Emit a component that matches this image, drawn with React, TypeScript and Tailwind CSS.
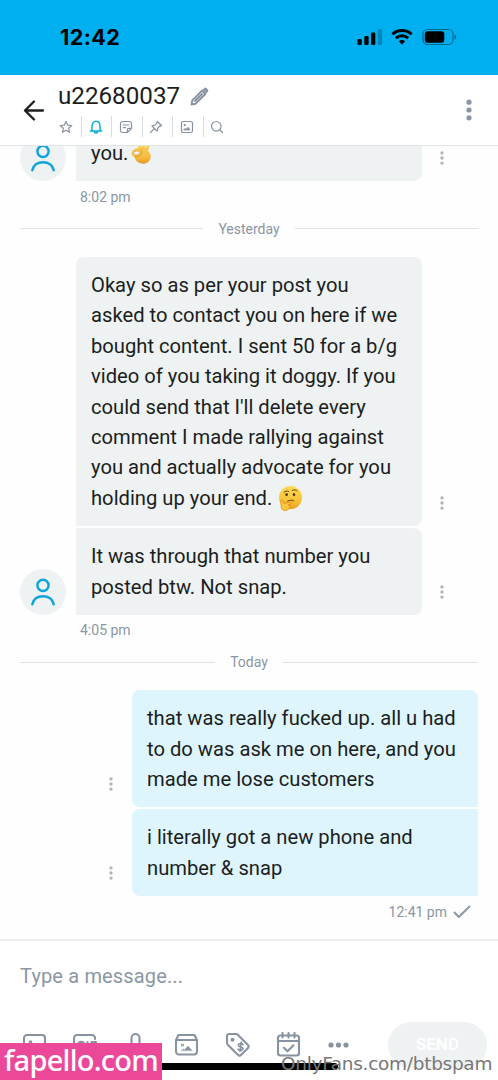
import type { ReactNode } from "react";

const stroke = {
  fill: "none",
  stroke: "currentColor",
  strokeLinecap: "round" as const,
  strokeLinejoin: "round" as const,
};

function Dots({ big = false }: { big?: boolean }) {
  return big ? (
    <svg width="6" height="22" viewBox="0 0 6 22" className="fill-[#8a96a3]">
      <circle cx="3" cy="3.2" r="2.6" />
      <circle cx="3" cy="11" r="2.6" />
      <circle cx="3" cy="18.8" r="2.6" />
    </svg>
  ) : (
    <svg width="4" height="14" viewBox="0 0 4 14" className="shrink-0 fill-[#b0b5b9]">
      <circle cx="2" cy="1.9" r="1.7" />
      <circle cx="2" cy="7" r="1.7" />
      <circle cx="2" cy="12.1" r="1.7" />
    </svg>
  );
}

function Avatar() {
  return (
    <div className="h-[46px] w-[46px] shrink-0 rounded-full bg-[#eef2f3] text-[#0fa5dc]">
      <svg width="46" height="46" viewBox="0 0 46 46" {...stroke} strokeWidth="2.5">
        <circle cx="23" cy="16.3" r="5.600" />
        <path d="M12.300 35.200c1-5 5.200-8 10.700-8s9.700 3 10.700 8" />
      </svg>
    </div>
  );
}

function OkHand() {
  return (
    <svg width="21" height="24" viewBox="0 0 21 24" className="ml-[3px] inline-block align-[-5px]">
      <defs>
        <linearGradient id="hand" x1="0" y1="0" x2="0" y2="1">
          <stop offset="0" stopColor="#fbd35c" />
          <stop offset=".7" stopColor="#f6bd3f" />
          <stop offset="1" stopColor="#e69a25" />
        </linearGradient>
      </defs>
      <path d="M7.500 7 6 2.500Q6 .8 7.400 1q1.200.3 2 2.400l1.400 3.400.6-4.600Q11.900.5 13.100.8q1.400.4 1.100 2.200l-.3 4.200 2.200-2.900q1-1.100 1.900-.4 1 .800.300 2.200l-1.300 3.600c2.700 2.500 3.400 6 1.900 9-1.500 2.900-4.400 4.200-7.800 3.900-4-.4-6.300-2.700-7.500-6.200L.8 13.800C.2 12 .8 10.200 2.600 8.800 4.100 7.600 5.900 7 7.500 7Z" fill="url(#hand)" />
      <ellipse cx="5.600" cy="12" rx="3.300" ry="2.100" transform="rotate(-8 5.600 12)" fill="#eef2f3" stroke="#dba034" strokeWidth=".8" />
      <path d="M9.500 8.200c1.800 1.300 2 3.500.9 5.200-1.300 2-3.600 2.700-6.300 2.500" {...stroke} stroke="#d99a2c" strokeWidth=".9" />
    </svg>
  );
}

function Thinking() {
  return (
    <svg width="25" height="26" viewBox="0 0 25 26" className="ml-[1px] inline-block align-[-6px]">
      <defs>
        <linearGradient id="face" x1="0" y1="0" x2="0" y2="1">
          <stop offset="0" stopColor="#fbda55" />
          <stop offset=".65" stopColor="#f8c238" />
          <stop offset="1" stopColor="#ee9b20" />
        </linearGradient>
      </defs>
      <circle cx="12.500" cy="12.500" r="11.500" fill="url(#face)" />
      <ellipse cx="8.600" cy="9.600" rx="1.300" ry="1.700" fill="#583613" />
      <ellipse cx="16" cy="9.600" rx="1.300" ry="1.700" fill="#583613" />
      <path d="M6 7.200c1.200-1.200 3-1.500 4.600-.8M14.300 5.400c1.800-1 3.600-.7 4.800.6M9.500 16.200c2-1.300 4.600-1.400 6.400-.4" {...stroke} stroke="#6d4312" strokeWidth="1" />
      <path d="M3 16.500c-.8-1.700 1-2.500 1.800-1l1.200 3 6.300-1.400c1.800-.2 2.100 1.500.5 2l-2.700.8c1.800.6 2 2.300.9 3.800-1.400 1.900-4.700 2.500-6.600.8-1.800-1.600-1.100-4.900-1.400-8Z" fill="#ffc83b" stroke="#db8a1c" strokeWidth=".8" />
    </svg>
  );
}

function Bubble({ lines, mine = false, shape }: { lines: ReactNode[]; mine?: boolean; shape: string }) {
  return (
    <div
      className={`w-[346px] shrink-0 px-[15px] py-[13px] text-[20.2px] leading-[30.4px] whitespace-nowrap text-[#1b1e20] ${
        mine ? "bg-[#def5fe]" : "bg-[#eef2f3]"
      } ${shape}`}
    >
      {lines.map((line, i) => (
        <div key={i} className="h-[30.4px]">{line}</div>
      ))}
    </div>
  );
}

function DayDivider({ label }: { label: string }) {
  return (
    <div className="flex h-5 items-center gap-[15px] px-5 text-[14px] leading-5 text-[#8a96a3]">
      <div className="h-px flex-1 bg-[#dde3e6]" />
      {label}
      <div className="h-px flex-1 bg-[#dde3e6]" />
    </div>
  );
}

function StatusBar() {
  return (
    <header className="flex h-[75px] shrink-0 items-center justify-between bg-[#00aff0] pr-[41px] pl-[60px] text-black">
      <span className="-mt-[2px] font-['Inter',sans-serif] text-[21.500px] leading-6 font-bold tracking-[0.45px]">12:42</span>
      <div className="-mt-[1px] flex items-center">
        <svg width="26" height="18" viewBox="0 0 26 18">
          <rect x="0.500" y="11" width="4.300" height="6" rx="1.300" />
          <rect x="7.300" y="8" width="4.300" height="9" rx="1.300" />
          <rect x="14" y="4.500" width="4.300" height="12.500" rx="1.300" />
          <rect x="20.800" y="1" width="4.300" height="16" rx="1.300" opacity=".22" />
        </svg>
        <svg width="22" height="18" viewBox="0 0 22 18" className="ml-[8px]" fill="none" stroke="black" strokeWidth="2.900">
          <path d="M1.400 6.300c5.400-5 13.800-5 19.200 0" />
          <path d="M4.900 10.100c3.500-3.200 8.700-3.200 12.200 0" />
          <path d="M7.800 13.200c1.800-1.600 4.600-1.600 6.400 0L11 16.600Z" fill="black" stroke="none" />
        </svg>
        <svg width="35" height="18" viewBox="0 0 35 18" className="ml-[9px]">
          <rect x="1" y="1.500" width="30" height="15" rx="4.600" fill="none" stroke="black" strokeOpacity=".4" strokeWidth="1.200" />
          <rect x="2.800" y="3.300" width="19.500" height="11.400" rx="3" />
          <path d="M32.500 6.500q1.800.8 1.800 2.500t-1.800 2.500Z" opacity=".45" />
        </svg>
      </div>
    </header>
  );
}

function HeaderTools() {
  const icons: ReactNode[] = [
    <path key="star" d="m7 1.300 1.650 3.800 4.100.4-3.100 2.700.9 4.100L7 10.150 3.450 12.300l.9-4.100-3.100-2.700 4.100-.4Z" />,
    <path key="bell" d="M1.300 11h11.400M2.400 11c.7-1 .6-2.200.6-4.200C3 3.500 4.400 1.300 7 1.300s4 2.200 4 5.500c0 2 0 3.200.6 4.200M5 11.300c.3 2.200 3.700 2.200 4 0" strokeWidth="1.500" />,
    <path key="note" d="M8.300 12.500H3.700a2.200 2.200 0 0 1-2.200-2.200V3.700a2.200 2.200 0 0 1 2.200-2.200h6.600a2.200 2.200 0 0 1 2.200 2.200v4.600Zm0 0V9.800a1.500 1.500 0 0 1 1.500-1.500h2.700M4.200 5h5.600M4.200 7.700h2.300" />,
    <path key="pin" d="m8.500 1.500 4 4-1.100.8-.8-.2-2 2.200c.3 1.200.1 2-.6 2.700L3 6c.7-.7 1.600-.9 2.700-.6l2.200-2-.2-.8ZM5.300 8.700 1.500 12.500" />,
    <g key="media"><rect x="1.500" y="1.500" width="11" height="11" rx="1.800" /><path d="M3.800 10h6.400L8 7.200 6.200 9.300 5.200 8.500Z" strokeWidth=".7" fill="currentColor" /><circle cx="4.800" cy="5.200" r=".5" /></g>,
    <g key="search"><circle cx="6.300" cy="6.300" r="4.800" /><path d="m10 10 2.500 2.500" /></g>,
  ];
  return (
    <div className="-mt-px flex h-[21px] items-center">
      {icons.map((icon, i) => (
        <div
          key={i}
          className={`flex h-[21px] shrink-0 items-center ${i === 0 ? "w-[22px]" : "w-[30.400px] justify-center border-l border-[#d5dbdf] pr-[2px]"}`}
        >
          <svg width="14" height="14" viewBox="0 0 14 14" {...stroke} strokeWidth="1.200" className={i === 1 ? "text-[#09b0d6]" : "text-[#8793a0]"}>
            {icon}
          </svg>
        </div>
      ))}
    </div>
  );
}

function ChatHeader() {
  return (
    <div className="flex h-[71px] shrink-0 border-b border-[#dfe4e6] bg-white pr-[26px] pl-[23px]">
      <svg width="22" height="22" viewBox="0 0 22 22" {...stroke} strokeWidth="2.300" className="mt-[25px] shrink-0 text-[#1b1e20]">
        <path d="M20 10.500H2M11 1.500 2 10.500l9 9" />
      </svg>
      <div className="ml-[14px] flex-1">
        <div className="flex h-[42px] items-center">
          <span className="-ml-px text-[24.200px] leading-7 text-[#1b1e20]">u22680037</span>
          <svg width="19" height="19" viewBox="0 0 19 19" {...stroke} strokeWidth="1.900" className="ml-[10px] text-[#8793a0]">
            <path d="m1.500 17.500.8-4.200L12 3.600l3.400 3.400-9.700 9.700ZM5 14l7-7" />
            <path d="m13.200 2.500 1-1c1.800-1.300 4.500 1.300 3.300 3.300l-1 1Z" fill="currentColor" strokeWidth="1" />
          </svg>
        </div>
        <HeaderTools />
      </div>
      <div className="mt-[24px]"><Dots big /></div>
    </div>
  );
}

function Conversation() {
  return (
    <main className="flex h-[793px] shrink-0 flex-col overflow-hidden">
      <div className="flex h-[35px] shrink-0 items-end">
        <div className="ml-5"><Avatar /></div>
        <div className="ml-[10px]">
          <Bubble shape="rounded-br-[8px]" lines={[<span key="ok">you.<OkHand /></span>]} />
        </div>
        <div className="mb-[16px] ml-[18px]"><Dots /></div>
      </div>
      <div className="mt-[6px] ml-[80px] h-5 text-[14px] leading-5 text-[#8a96a3]">8:02 pm</div>
      <div className="mt-[11.500px]"><DayDivider label="Yesterday" /></div>
      <div className="mt-[18.500px] flex items-end pl-[76px]">
        <Bubble
          shape="rounded-t-[8px] rounded-br-[8px]"
          lines={[
            "Okay so as per your post you",
            "asked to contact you on here if we",
            "bought content. I sent 50 for a b/g",
            "video of you taking it doggy. If you",
            "could send that I'll delete every",
            "comment I made rallying against",
            "you and actually advocate for you",
            <span key="end">holding up your end. <Thinking /></span>,
          ]}
        />
        <div className="mb-[16px] ml-[18px]"><Dots /></div>
      </div>
      <div className="mt-[2px] flex items-end pl-5">
        <Avatar />
        <div className="ml-[10px]">
          <Bubble shape="rounded-r-[8px]" lines={["It was through that number you", "posted btw. Not snap."]} />
        </div>
        <div className="mb-[16px] ml-[18px]"><Dots /></div>
      </div>
      <div className="mt-[5.400px] ml-[80px] h-5 text-[14px] leading-5 text-[#8a96a3]">4:05 pm</div>
      <div className="mt-[12px]"><DayDivider label="Today" /></div>
      <div className="mt-[18px] flex items-end justify-end pr-5">
        <div className="mr-[19px] mb-[16px]"><Dots /></div>
        <Bubble
          mine
          shape="rounded-t-[8px] rounded-bl-[8px]"
          lines={["that was really fucked up. all u had", "to do was ask me on here, and you", "made me lose customers"]}
        />
      </div>
      <div className="mt-[2px] flex items-end justify-end pr-5">
        <div className="mr-[19px] mb-[16px]"><Dots /></div>
        <Bubble mine shape="rounded-l-[8px]" lines={["i literally got a new phone and", "number & snap"]} />
      </div>
      <div className="mt-[5.400px] flex h-5 items-center justify-end gap-[6px] pr-[27px] text-[14px] leading-5 text-[#8a96a3]">
        12:41 pm
        <svg width="18" height="14" viewBox="0 0 18 14" {...stroke} strokeWidth="1.900"><path d="m1.500 7.500 4.300 4.500L16.500 1.500" /></svg>
      </div>
    </main>
  );
}

function Composer() {
  const icons: ReactNode[] = [
    <g key="photo"><rect x="2" y="3" width="21" height="20" rx="3" /><circle cx="8.500" cy="10" r=".8" /></g>,
    <g key="gif"><path d="M23 7V6a3 3 0 0 0-3-3H5a3 3 0 0 0-3 3v14a3 3 0 0 0 3 3h15a3 3 0 0 0 3-3v-3" /><path d="M11.500 10.500C8 9 5.500 10.500 5.500 13.500s2 4 6 3v-3M15.500 10v7M19.500 17v-7H24M19.500 13.500h4" /></g>,
    <g key="mic"><rect x="8.500" y="2" width="8" height="15" rx="4" /><path d="M3.500 12c0 6 4 9 9 9s9-3 9-9" /></g>,
    <g key="album"><path d="M4.500 3h16L23 8v11.500a3 3 0 0 1-3 3H5a3 3 0 0 1-3-3V8ZM2 8h21" /><path d="m7.500 18.500 2-1.500 1 .800 3.500-3.800 4 4.500Z" fill="currentColor" strokeWidth=".4" /><circle cx="8.500" cy="13" r=".5" /></g>,
    <g key="price"><path d="M2 4a2 2 0 0 1 2-2h7a3 3 0 0 1 2 .9l9.800 9.900a2.500 2.500 0 0 1 0 3.500l-6.500 6.500a2.500 2.500 0 0 1-3.500 0L3 13a3 3 0 0 1-1-2Z" /><circle cx="7.500" cy="7.700" r="1" fill="currentColor" /><path d="M18 12.500c-1.500-1.900-4.800-1-4.700.8.100 2.200 4.700.9 4.700 3.300 0 2-3.400 2.500-5 .6M16.200 10.300l-1.200 9" strokeWidth="1.700" /></g>,
    <g key="schedule"><rect x="2" y="3.500" width="21" height="20" rx="2.500" /><path d="M2 9h21M6.500 1v4.500M12.500 1v4.500M18.500 1v4.500M8 15.800l3.500 3.500 6-6" /></g>,
  ];
  return (
    <footer className="flex h-[141px] shrink-0 flex-col overflow-hidden border-t-2 border-[#eaedef] bg-white">
      <div className="mt-[21px] ml-[20px] h-7 text-[20px] leading-7 tracking-[0.15px] text-[#8a96a3]">Type a message...</div>
      <div className="mt-[31.500px] flex h-[46px] shrink-0 items-center pr-[11px] pl-[21.500px] text-[#8793a0]">
        {icons.map((icon, i) => (
          <svg key={i} width="25" height="25" viewBox="0 0 25 25" {...stroke} strokeWidth="2.100" className="mr-[25.900px] shrink-0">
            {icon}
          </svg>
        ))}
        <svg width="21" height="6" viewBox="0 0 21 6" className="ml-[1px] shrink-0 fill-current">
          <circle cx="3" cy="3" r="2.600" /><circle cx="10.500" cy="3" r="2.600" /><circle cx="18" cy="3" r="2.600" />
        </svg>
        <div className="ml-auto flex h-[46px] w-[99px] shrink-0 items-center justify-center rounded-full bg-[#eef2f3] text-[17px] font-medium text-white">
          SEND
        </div>
      </div>
    </footer>
  );
}

export default function App() {
  return (
    <div className="relative flex h-[1080px] w-[498px] flex-col overflow-hidden bg-[#fefefe] font-['Roboto',sans-serif]">
      <StatusBar />
      <ChatHeader />
      <Conversation />
      <Composer />
      <div className="absolute top-[1063px] left-[155px] h-[7px] w-[183px] rounded-full bg-black" />
      <div className="absolute top-[1043px] left-0 h-[37px] w-[162px] bg-[#ec4899] pl-[4px] font-['Noto_Sans',sans-serif] text-[29px] leading-[34px] font-medium tracking-[-0.75px] whitespace-nowrap text-white">
        fapello.com
      </div>
      <div className="absolute top-[1052px] left-[281px] font-['DejaVu_Sans',sans-serif] text-[18.500px] leading-6 tracking-[-0.3px] whitespace-nowrap text-[#777777]">
        OnlyFans.com/btbspam
      </div>
    </div>
  );
}
